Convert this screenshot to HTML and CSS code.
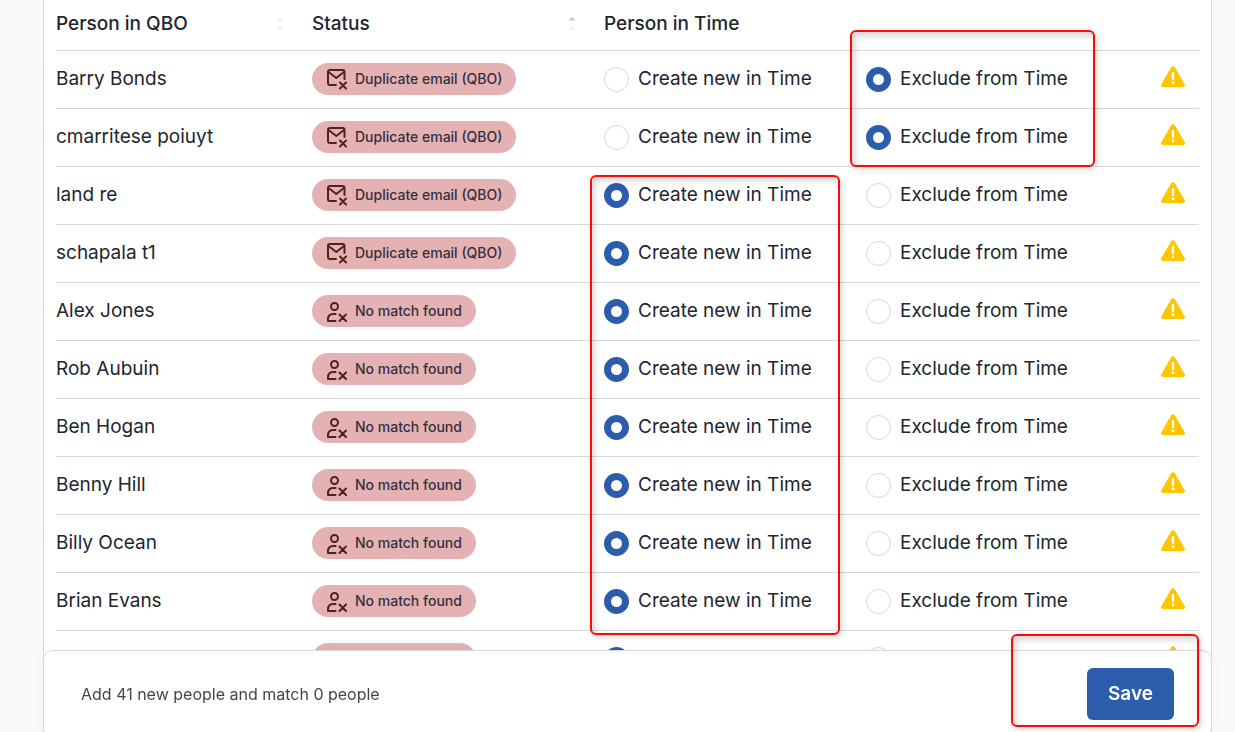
FILE: index.html
```
<!DOCTYPE html>
<html lang="en">
<head>
<meta charset="utf-8">
<title>Match people</title>
<link rel="stylesheet" href="styles.css">
</head>
<body>
<svg class="sprite" aria-hidden="true">
  <symbol id="mail-x" viewBox="0 0 22 22">
    <g fill="none" stroke="currentColor" stroke-width="2" stroke-linecap="round" stroke-linejoin="round">
      <path d="M10 17H4a2 2 0 0 1-2-2V4a2 2 0 0 1 2-2h12.500a2 2 0 0 1 2 2v7"/>
      <path d="M2.500 4l7.750 6 7.750-6"/>
      <path d="M14 14.500l6 6M20 14.500l-6 6"/>
    </g>
  </symbol>
  <symbol id="person-x" viewBox="0 0 22 22">
    <g fill="none" stroke="currentColor" stroke-width="2" stroke-linecap="round" stroke-linejoin="round">
      <circle cx="8.500" cy="6.500" r="3.500"/>
      <path d="M9.500 21H2v-1.500c0-3.500 2-5.500 5-5.500h2.500"/>
      <path d="M13.500 14.500l6.500 6.500M20 14.500l-6.500 6.500"/>
    </g>
  </symbol>
  <symbol id="warning" viewBox="0 0 24 21">
    <path fill="#ffc600" d="M10.300 1.100a2 2 0 0 1 3.400 0l10 17.200a1.700 1.700 0 0 1-1.500 2.600H1.800A1.700 1.700 0 0 1 .3 18.300z"/>
    <path stroke="#fff" stroke-width="2.400" stroke-linecap="round" d="M12 7v6"/>
    <circle cx="12" cy="16.800" r="1.500" fill="#fff"/>
  </symbol>
  <symbol id="sort" viewBox="0 0 8 16">
    <path class="sort-up" d="M4 1l3.500 3.500h-7z"/>
    <path class="sort-down" d="M4 15l3.500-3.500h-7z"/>
  </symbol>
</svg>

<main class="panel">
  <table class="people">
    <colgroup>
      <col class="col-name"><col class="col-status"><col class="col-create"><col class="col-exclude"><col>
    </colgroup>
    <thead>
      <tr>
        <th scope="col"><div class="head">Person in QBO<button class="sort" type="button" aria-label="Sort by person"><svg><use href="#sort"/></svg></button></div></th>
        <th scope="col"><div class="head">Status<button class="sort sort-active" type="button" aria-label="Sort by status"><svg><use href="#sort"/></svg></button></div></th>
        <th scope="col" colspan="3">Person in Time</th>
      </tr>
    </thead>
    <tbody id="rows"></tbody>
  </table>
  <div class="callout callout-exclude"></div>
  <div class="callout callout-create"></div>
</main>

<footer class="actions">
  <p class="summary">Add 41 new people and match 0 people</p>
  <button class="save" type="button">Save</button>
  <div class="callout callout-save"></div>
</footer>
<script src="people.js"></script>
</body>
</html>
```

FILE: styles.css
```
* {
  box-sizing: border-box;
}

body {
  margin: 0;
  height: 100vh;
  overflow: hidden;
  background: #fbfaf9;
  color: #21262f;
  font: 400 19px/24px Inter, "Liberation Sans", sans-serif;
}

.sprite {
  position: absolute;
  width: 0;
  height: 0;
}

.panel {
  position: relative;
  min-height: 100vh;
  margin: 0 23px 0 43px;
  padding: 0 12px;
  background: #fff;
  border: solid #d9d8da;
  border-width: 0 1px;
  box-shadow: 0 0 16px rgba(0, 0, 0, 0.02);
}

.people {
  width: 100%;
  table-layout: fixed;
  border-collapse: collapse;
  color: #21262f;
}

.col-name { width: 256px; }
.col-status { width: 292px; }
.col-create { width: 262px; }
.col-exclude { width: 262px; }

.people th,
.people td {
  height: 58px;
  padding: 0;
  border-bottom: 1px solid #d9d8da;
  text-align: left;
  vertical-align: middle;
}

.people th {
  height: 50px;
  padding-bottom: 2px;
  font-weight: 500;
}

.head {
  display: flex;
  align-items: center;
  justify-content: space-between;
  padding-right: 28px;
}

.sort {
  display: flex;
  padding: 0;
  border: 0;
  background: none;
  color: #efefef;
}

.sort svg {
  width: 8px;
  height: 16px;
}

.sort-active {
  color: #c8c4c6;
}

.sort-up {
  fill: currentColor;
}

.sort-down {
  fill: #efefef;
}

.chip {
  display: inline-flex;
  align-items: center;
  gap: 7px;
  height: 32px;
  padding: 0 14px;
  border-radius: 16px;
  background: #e5b2b3;
  color: #33303f;
  font-size: 14px;
  font-weight: 500;
  vertical-align: middle;
}

.chip svg {
  width: 22px;
  height: 22px;
  color: #54201b;
}

.choice {
  display: flex;
  align-items: center;
  gap: 9px;
}

.choice input {
  appearance: none;
  flex: none;
  width: 25px;
  height: 25px;
  margin: 0;
  border: 1px solid #dcd6d8;
  border-radius: 50%;
  background: #fff;
}

.choice input:checked {
  border: 7px solid #2c5dad;
}

.warn {
  display: flex;
  justify-content: flex-end;
  padding: 0 14px 6px 0;
}

.warn svg {
  width: 24px;
  height: 21px;
}

.actions {
  position: fixed;
  right: 23px;
  bottom: -6px;
  left: 43px;
  display: flex;
  align-items: center;
  justify-content: space-between;
  padding: 17px 37px;
  border: 1px solid #d9d8da;
  border-radius: 10px;
  background: #fff;
  box-shadow: 0 0 16px rgba(0, 0, 0, 0.03);
}

.summary {
  margin: 0;
  color: #44464f;
  font-size: 16px;
}

.save {
  height: 52px;
  padding: 0 21px;
  border: 0;
  border-radius: 6px;
  background: #2c5dad;
  color: #fff;
  font: inherit;
  font-weight: 600;
}

.callout {
  position: absolute;
  border: 2px solid #fa0a0a;
  border-radius: 6px;
  box-shadow: 2px 2px 6px rgba(0, 0, 0, 0.16), inset 3px 4px 6px rgba(0, 0, 0, 0.16);
  pointer-events: none;
}

.callout-exclude {
  top: 30px;
  left: 806px;
  width: 245px;
  height: 137px;
}

.callout-create {
  top: 175px;
  left: 546px;
  width: 250px;
  height: 460px;
}

.callout-save {
  top: -17px;
  right: 12px;
  width: 188px;
  height: 93px;
}
```

FILE: people.js
```
const people = [
  ["Barry Bonds", "duplicate", "exclude"],
  ["cmarritese poiuyt", "duplicate", "exclude"],
  ["land re", "duplicate", "create"],
  ["schapala t1", "duplicate", "create"],
  ["Alex Jones", "none", "create"],
  ["Rob Aubuin", "none", "create"],
  ["Ben Hogan", "none", "create"],
  ["Benny Hill", "none", "create"],
  ["Billy Ocean", "none", "create"],
  ["Brian Evans", "none", "create"],
  ["", "none", "create"]
];

const statuses = {
  duplicate: ["mail-x", "Duplicate email (QBO)"],
  none: ["person-x", "No match found"]
};

const choice = (row, value, label, selected) =>
  `<td><label class="choice"><input type="radio" name="person-${row}" value="${value}"${selected === value ? " checked" : ""}>${label}</label></td>`;

document.getElementById("rows").innerHTML = people.map(([name, status, action], i) => {
  const [icon, text] = statuses[status];
  return `<tr>
    <td>${name}</td>
    <td><span class="chip"><svg aria-hidden="true"><use href="#${icon}"/></svg>${text}</span></td>
    ${choice(i, "create", "Create new in Time", action)}
    ${choice(i, "exclude", "Exclude from Time", action)}
    <td><div class="warn"><svg role="img" aria-label="Warning"><use href="#warning"/></svg></div></td>
  </tr>`;
}).join("");
```
